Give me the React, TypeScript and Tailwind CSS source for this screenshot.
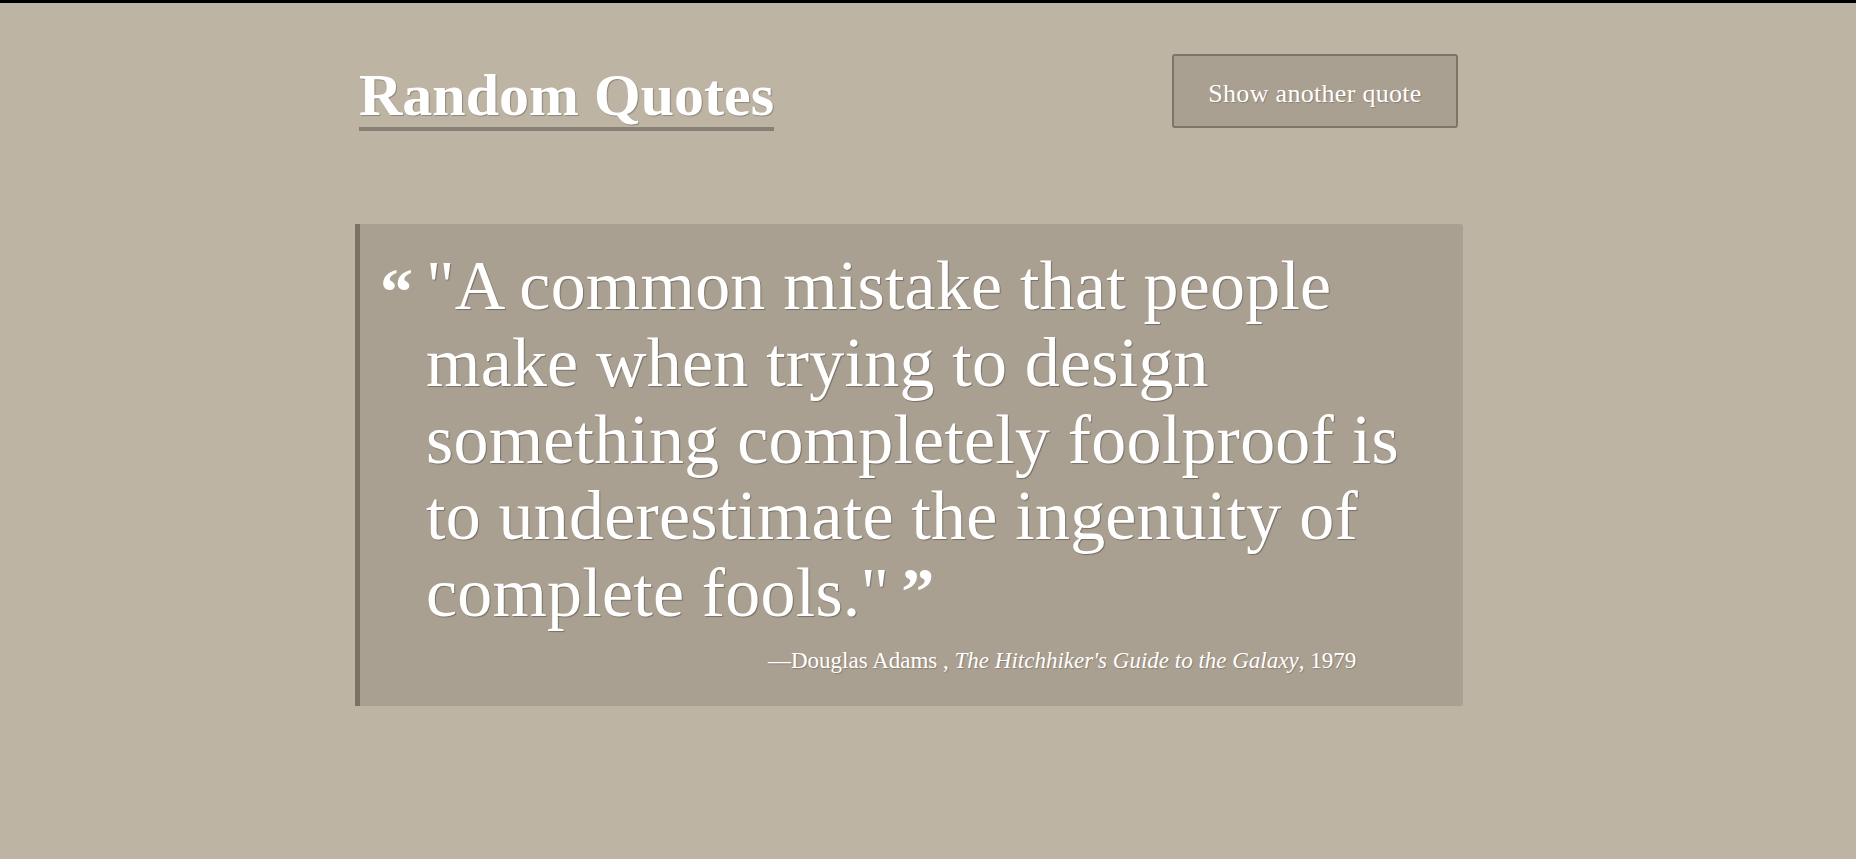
import React from "react";

const serif = { fontFamily: '"Liberation Serif", "DejaVu Serif", serif' };

export default function App() {
  const lines = [
    '"A common mistake that people',
    "make when trying to design",
    "something completely foolproof is",
    "to underestimate the ingenuity of",
  ];
  return (
    <div className="min-h-[859px] w-full bg-[#beb4a3] border-t-[3px] border-black" style={serif}>
      <div className="ml-[355px] w-[1108px] pt-[43px]">
        <header className="flex items-start justify-between">
          <h1 className="ml-[4px] mt-[17px] inline-block border-b-4 border-[#878074] text-[60px] font-bold leading-[64px] text-white [text-shadow:1px_1px_1px_rgba(0,0,0,0.25)]">
            Random Quotes
          </h1>
          <button className="mt-[8px] mr-[5px] h-[74px] w-[286px] rounded-[3px] border-2 border-[#7d7568] bg-[#aaa091] pt-[4px] text-[26px] tracking-[0.3px] text-white [text-shadow:1px_1px_1px_rgba(0,0,0,0.2)]">
            Show another quote
          </button>
        </header>
        <section className="mt-[93px] h-[482px] rounded-r-[3px] border-l-[5px] border-[#7a7266] bg-[#aaa091] pt-[24px]">
          <div className="flex">
            <span className="ml-[20px] mt-[12px] w-[46px] text-[66px] font-bold leading-[64px] text-white">“</span>
            <blockquote className="text-[70px] leading-[76.8px] tracking-[0.2px] text-white [text-shadow:1px_1px_1px_rgba(0,0,0,0.3)]">
              {lines.map((l) => (
                <div key={l}>{l}</div>
              ))}
              <div>
                complete fools."
                <span className="relative top-[-3px] ml-[12px] text-[66px] font-bold [text-shadow:none]">”</span>
              </div>
            </blockquote>
          </div>
          <p className="mt-[11px] ml-[408px] text-[23px] text-white [text-shadow:1px_1px_1px_rgba(0,0,0,0.2)]">
            —Douglas Adams , <cite className="italic">The Hitchhiker's Guide to the Galaxy</cite>, 1979
          </p>
        </section>
      </div>
    </div>
  );
}
